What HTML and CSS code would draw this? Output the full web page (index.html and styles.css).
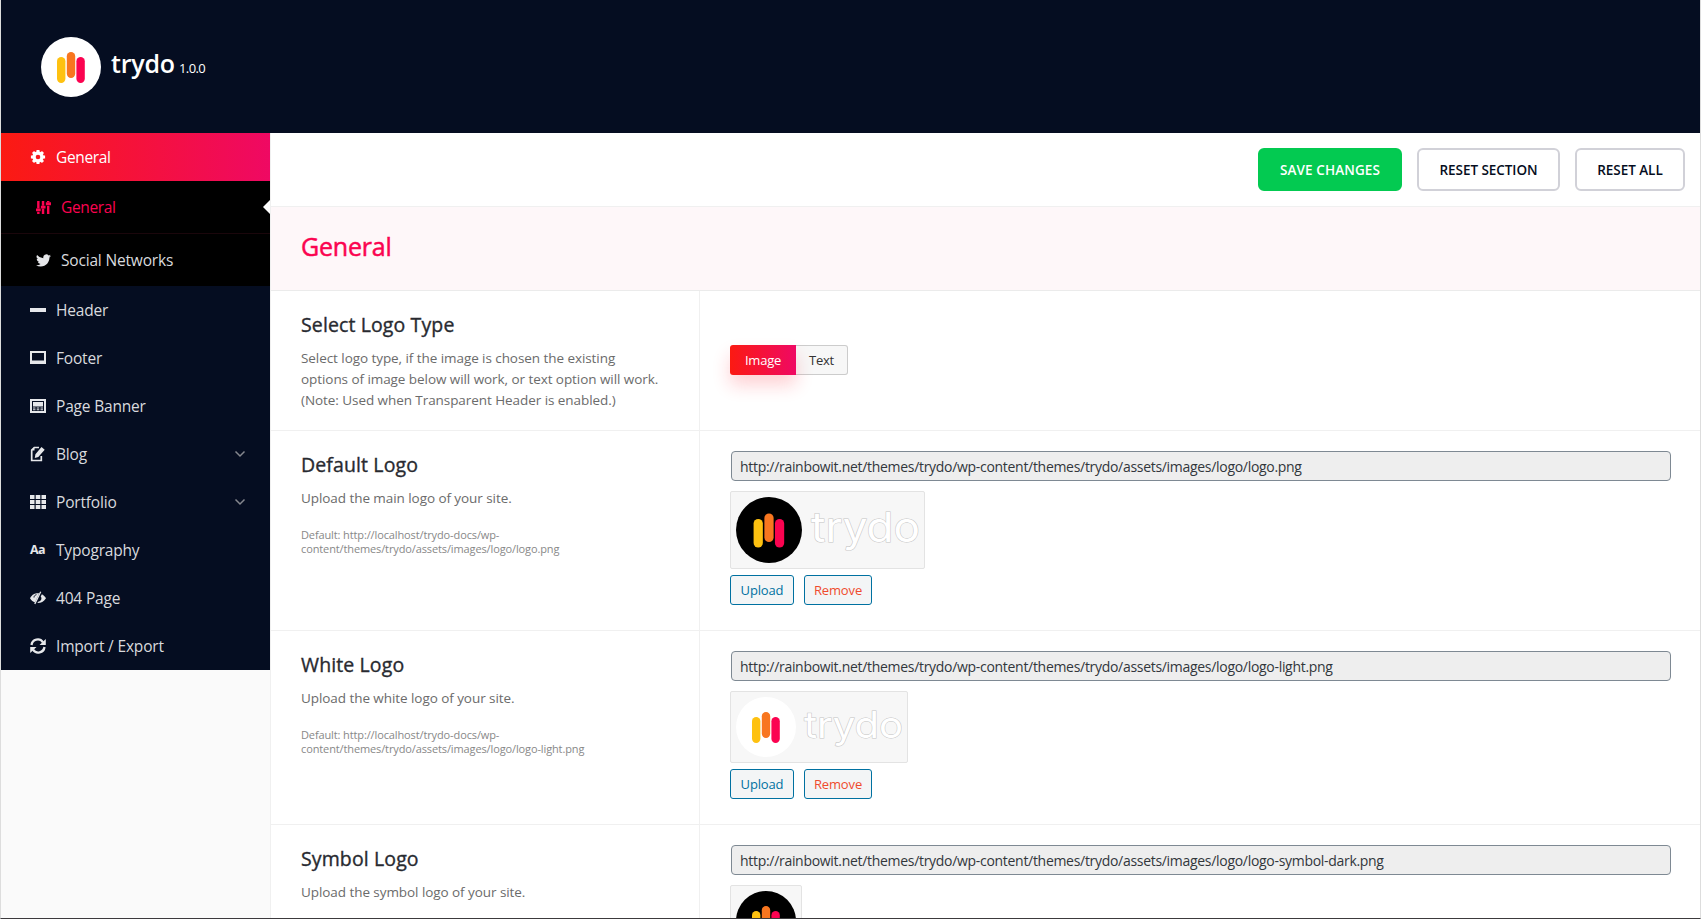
FILE: index.html
```html
<!DOCTYPE html>
<html lang="en">
<head>
<meta charset="utf-8">
<title>Trydo Options</title>
<link rel="stylesheet" href="styles.css">
</head>
<body>
<svg class="defs" width="0" height="0">
  <symbol id="bars" viewBox="0 0 60 60">
    <rect x="16" y="20" width="8.4" height="26" rx="4.2" fill="#fec110"/>
    <rect x="25.8" y="15" width="8.4" height="26" rx="4.2" fill="#f8761f"/>
    <rect x="35.4" y="20" width="8.4" height="26" rx="4.2" fill="#fb0350"/>
  </symbol>
</svg>
<div class="panel">
  <header class="header">
    <svg class="header-logo" viewBox="0 0 60 60"><circle cx="30" cy="30" r="30" fill="#fff"/><use href="#bars"/></svg>
    <h1 class="brand">trydo</h1><span class="version">1.0.0</span>
  </header>
  <div class="body">
    <nav class="sidebar">
      <a class="item active"><svg class="icon" viewBox="0 0 16 16"><circle cx="8" cy="8" r="4" fill="none" stroke="currentColor" stroke-width="3.4"/><path d="M8 .9v2.6M8 12.5v2.6M.9 8h2.6M12.5 8h2.6M3 3l1.8 1.8M11.2 11.2L13 13M13 3l-1.8 1.8M4.8 11.2L3 13" stroke="currentColor" stroke-width="3"/></svg><span>General</span></a>
      <a class="item sub current"><svg class="icon" viewBox="0 0 16 16"><path d="M2.500 1v8M2.500 12.500V15M7.500 1v5M7.500 9v6M13 1v1.500M13 6v9" stroke="currentColor" stroke-width="2.600"/><path d="M0 10.500h5M5.200 7.500h5M10.500 4h5.500" stroke="currentColor" stroke-width="3"/></svg><span>General</span></a>
      <a class="item sub"><svg class="icon" viewBox="0 0 24 24"><path fill="currentColor" d="M24 4.600a10 10 0 0 1-2.800.8 5 5 0 0 0 2.100-2.700 10 10 0 0 1-3.100 1.200 4.900 4.900 0 0 0-8.400 4.500A14 14 0 0 1 1.700 3.100a4.900 4.900 0 0 0 1.500 6.600 4.900 4.900 0 0 1-2.200-.6v.1a4.900 4.900 0 0 0 3.900 4.800 5 5 0 0 1-2.200.1 4.900 4.900 0 0 0 4.600 3.400A9.900 9.900 0 0 1 0 19.500 14 14 0 0 0 7.500 21.700c9.100 0 14-7.500 14-14v-.6A10 10 0 0 0 24 4.600z"/></svg><span>Social Networks</span></a>
      <a class="item"><svg class="icon" viewBox="0 0 16 16"><rect x="0" y="6" width="16" height="4" fill="currentColor"/></svg><span>Header</span></a>
      <a class="item"><svg class="icon" viewBox="0 0 16 16"><path fill="currentColor" fill-rule="evenodd" d="M0 1h16v13H0zM2 3v7.500h12V3z"/></svg><span>Footer</span></a>
      <a class="item"><svg class="icon" viewBox="0 0 16 16"><path fill="currentColor" fill-rule="evenodd" d="M0 1h16v14H0zM2 3v10h12V3z"/><path fill="currentColor" d="M3 4h10v4.500H3zM3 9.500h2.500v1H3zM6.700 9.500h2.600v1H6.700zM10.500 9.500H13v1h-2.500zM3 11.300h2.500v1H3zM6.700 11.300h2.600v1H6.700zM10.500 11.300H13v1h-2.500z"/></svg><span>Page Banner</span></a>
      <a class="item"><svg class="icon" viewBox="0 0 16 16"><path d="M9 1.500H4.300L1.700 4v10.500h9.600V10" fill="none" stroke="currentColor" stroke-width="1.700"/><path fill="currentColor" d="M1 4.500L4.500 1v3.500zM11.500 1l3.200 2.700L8.300 11 4.800 12l.6-3.800z"/></svg><span>Blog</span><svg class="chevron" viewBox="0 0 12 8"><path d="M1.500 1.500L6 6l4.500-4.500" fill="none" stroke="#85878e" stroke-width="1.500"/></svg></a>
      <a class="item"><svg class="icon" viewBox="0 0 16 16"><path fill="currentColor" d="M0 1h4.500v4H0zM5.700 1h4.600v4H5.700zM11.500 1H16v4h-4.500zM0 6h4.500v4H0zM5.700 6h4.600v4H5.700zM11.500 6H16v4h-4.500zM0 11h4.500v4H0zM5.700 11h4.600v4H5.700zM11.500 11H16v4h-4.500z"/></svg><span>Portfolio</span><svg class="chevron" viewBox="0 0 12 8"><path d="M1.500 1.500L6 6l4.500-4.500" fill="none" stroke="#85878e" stroke-width="1.500"/></svg></a>
      <a class="item"><span class="icon aa">Aa</span><span>Typography</span></a>
      <a class="item"><svg class="icon" viewBox="0 0 16 16"><path fill="currentColor" d="M0 8.200C3 3.200 6 3 9.300 3.300L5 12.400C3 11.800 1.300 10.300 0 8.200zM11.900 4.200C13.500 5 15 6.500 16 8.200c-2.500 3.800-5 4.900-8.600 4.800l.7-1.300c3-.4 4.300-3.200 2.600-5.200z"/><path d="M10.700 1.800L4.800 14" stroke="currentColor" stroke-width="1.300"/><path d="M4 7.500c0-1.500 1-2.500 2.500-2.800" fill="none" stroke="#050d21"/></svg><span>404 Page</span></a>
      <a class="item"><svg class="icon" viewBox="0 0 16 16"><path d="M1.500 7A6.300 6.300 0 0 1 13 4.300M14.500 9A6.300 6.300 0 0 1 3 11.700" fill="none" stroke="currentColor" stroke-width="2.300"/><path fill="currentColor" d="M15.800 1v6H9.500zM.2 15V9h6.300z"/></svg><span>Import / Export</span></a>
    </nav>
    <main class="main">
      <div class="toolbar">
        <button class="btn save">SAVE CHANGES</button>
        <button class="btn section">RESET SECTION</button>
        <button class="btn all">RESET ALL</button>
      </div>
      <div class="heading"><h2>General</h2></div>
      <section class="row type">
        <div class="label">
          <h3>Select Logo Type</h3>
          <p>Select logo type, if the image is chosen the existing<br>options of image below will work, or text option will work.<br>(Note: Used when Transparent Header is enabled.)</p>
        </div>
        <div class="field center">
          <div class="switch"><span class="on">Image</span><span class="off">Text</span></div>
        </div>
      </section>
      <section class="row default">
        <div class="label">
          <h3>Default Logo</h3>
          <p>Upload the main logo of your site.</p>
          <small>Default: http://localhost/trydo-docs/wp-<br>content/themes/trydo/assets/images/logo/logo.png</small>
        </div>
        <div class="field">
          <div class="input"><span>http://rainbowit.net/themes/trydo/wp-content/themes/trydo/assets/images/logo/logo.png</span></div>
          <div class="preview">
            <svg width="183" height="66" viewBox="0 0 183 66"><circle cx="33" cy="33" r="33"/><use href="#bars" width="66" height="66"/><text class="wordmark" x="75" y="44.500" font-size="41" textLength="109" lengthAdjust="spacingAndGlyphs">trydo</text></svg>
          </div>
          <div class="actions"><button class="upload">Upload</button><button class="remove">Remove</button></div>
        </div>
      </section>
      <section class="row white">
        <div class="label">
          <h3>White Logo</h3>
          <p>Upload the white logo of your site.</p>
          <small>Default: http://localhost/trydo-docs/wp-<br>content/themes/trydo/assets/images/logo/logo-light.png</small>
        </div>
        <div class="field">
          <div class="input"><span>http://rainbowit.net/themes/trydo/wp-content/themes/trydo/assets/images/logo/logo-light.png</span></div>
          <div class="preview">
            <svg width="166" height="60" viewBox="0 0 166 60"><circle cx="30" cy="30" r="30" fill="#fff"/><use href="#bars" width="60" height="60"/><text class="wordmark" x="68" y="40.500" font-size="37" textLength="99" lengthAdjust="spacingAndGlyphs">trydo</text></svg>
          </div>
          <div class="actions"><button class="upload">Upload</button><button class="remove">Remove</button></div>
        </div>
      </section>
      <section class="row">
        <div class="label">
          <h3>Symbol Logo</h3>
          <p>Upload the symbol logo of your site.</p>
        </div>
        <div class="field">
          <div class="input"><span>http://rainbowit.net/themes/trydo/wp-content/themes/trydo/assets/images/logo/logo-symbol-dark.png</span></div>
          <div class="preview">
            <svg width="60" height="60" viewBox="0 0 60 60"><circle cx="30" cy="30" r="30"/><use href="#bars" width="60" height="60"/></svg>
          </div>
        </div>
      </section>
    </main>
  </div>
</div>
</body>
</html>
```
FILE: styles.css
```css
* { box-sizing: border-box; }
body { margin: 0; height: 919px; overflow: hidden; background: #fff; font-family: "Open Sans", "Noto Sans", sans-serif; }
h1, h2, h3, p { margin: 0; }
.defs { display: block; }
.panel { height: 919px; display: flex; flex-direction: column; overflow: hidden; border-left: 1px solid #ddd; border-right: 1px solid #ddd; border-bottom: 1px solid #3c3a3d; background: #fafafa; }
.header { flex: none; height: 133px; background: #050d21; display: flex; align-items: flex-start; padding: 37px 0 0 40px; color: #fff; }
.header-logo { width: 60px; height: 60px; }
.brand { margin: 8px 0 0 10px; font-size: 25px; line-height: 36px; font-weight: 600; letter-spacing: -.2px; width: 68px; }
.version { margin-top: 22px; font-size: 13px; line-height: 18px; letter-spacing: -.6px; }
.body { flex: 1; min-height: 0; display: flex; }
.sidebar { flex: none; width: 269px; }
.item { position: relative; display: flex; align-items: center; height: 48px; padding-left: 29px; background: #050d21; color: #d9dade; font-size: 15.500px; letter-spacing: -.18px; }
.item .icon { flex: none; width: 16px; height: 16px; margin-right: 10px; color: #e6e7ea; }
.item.active { background: linear-gradient(90deg, #fb1a12, #ef0963); color: #fff; letter-spacing: -.35px; }
.item.active .icon { color: #fff; }
.item.sub { height: 52px; padding-left: 35px; background: #000; }
.item.sub .icon { width: 15px; height: 15px; margin-right: 10px; }
.item.current, .item.current .icon { color: #fb0350; }
.item.current { height: 53px; border-bottom: 1px solid #1a060b; letter-spacing: -.35px; }
.item.current::after { content: ""; position: absolute; right: 0; top: 19px; border: 7px solid transparent; border-left: 0; border-right-color: #fff; }
.item .aa { font-size: 12.500px; line-height: 16px; font-weight: 700; letter-spacing: -.6px; }
.chevron { width: 12px; height: 8px; margin-left: auto; margin-right: 24px; }
.main { flex: 1; min-width: 0; background: #fff; border-left: 1px solid #f0f0f0; }
.toolbar { height: 74px; display: flex; justify-content: flex-end; gap: 15px; padding: 15px 15px 0 0; border-bottom: 1px solid #f0f0f0; }
.btn { height: 43px; padding: 0; border: 2px solid #d1d1d8; border-radius: 6px; background: #fff; color: #050d21; font: 600 13.500px "Open Sans", sans-serif; letter-spacing: -.05px; }
.save { width: 144px; border-color: #03ca51; background: #03ca51; color: #fff; letter-spacing: .1px; }
.section { width: 143px; }
.all { width: 110px; }
.heading { height: 84px; padding: 22px 0 0 30px; background: #fef7f9; border-bottom: 1px solid #ebebeb; }
.heading h2 { color: #fb0350; font-size: 25px; line-height: 34px; font-weight: 500; letter-spacing: -.2px; -webkit-text-stroke: .5px #fb0350; }
.row { display: flex; border-bottom: 1px solid #f0f0f0; height: 140px; }
.row.default { height: 200px; }
.row.white { height: 194px; }
.label { width: 429px; padding: 20px 0 0 30px; border-right: 1px solid #f0f0f0; }
.label h3 { color: #282a30; font-size: 19.500px; line-height: 28px; font-weight: 500; letter-spacing: .12px; -webkit-text-stroke: .35px #282a30; }
.label p { margin-top: 9px; color: #6b6b6b; font-size: 13.500px; line-height: 21px; letter-spacing: -.065px; white-space: nowrap; }
.label small { display: block; margin-top: 19px; color: #888; font-size: 11px; line-height: 14px; letter-spacing: -.12px; white-space: nowrap; }
.field { flex: 1; padding: 20px 29px 0 30px; }
.center { display: flex; align-items: center; padding-top: 0; padding-bottom: 2px; }
.switch { display: flex; height: 30px; font-size: 13px; line-height: 30px; text-align: center; letter-spacing: -.2px; }
.on { width: 66px; color: #fff; border-radius: 3px 0 0 3px; background: linear-gradient(90deg, #fb1a12, #ef0963); box-shadow: 0 10px 18px rgba(251, 26, 40, .2); z-index: 1; }
.off { width: 52px; border: 1px solid #ccc; border-left: 0; border-radius: 0 3px 3px 0; background: #f7f7f7; color: #333; line-height: 29px; }
.input { height: 30px; margin-left: 1px; padding-left: 8px; border: 1px solid #7e8993; border-radius: 4px; background: #eee; color: #32373c; font-size: 14px; line-height: 30px; letter-spacing: -.3px; white-space: nowrap; }
.preview { display: table; margin-top: 10px; padding: 5px; border: 1px solid #e3e3e3; border-radius: 2px; background: #f7f7f7; }
.preview svg { display: block; }
.wordmark { font-family: Inter, sans-serif; font-weight: 400; fill: #fff; stroke: #c4c4c4; stroke-width: 1px; paint-order: stroke; }
.actions { display: flex; gap: 10px; margin-top: 6px; }
.actions button { height: 30px; padding: 0; border: 1px solid #0071a1; border-radius: 3px; background: #f3f5f6; font: 13px "Open Sans", sans-serif; letter-spacing: -.15px; }
.actions .upload { width: 64px; color: #0071a1; }
.actions .remove { width: 68px; color: #ef4b2d; }
```
